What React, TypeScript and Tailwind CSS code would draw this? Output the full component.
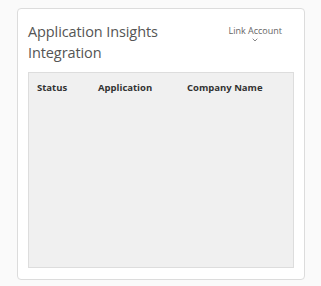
import React from "react";

export default function App() {
  return (
    <div
      className="w-[321px] h-[286px] bg-[#fafafa] pt-[8px] pl-[17px]"
      style={{ fontFamily: '"Open Sans", sans-serif' }}
    >
      <div className="w-[288px] h-[272px] bg-white border border-[#dcdcdc] rounded-[4px] flex flex-col px-[10px] pb-[11px] pt-[12px]">
        <div className="flex justify-between">
          <h2 className="text-[14.5px] leading-[21px] tracking-[-0.1px] text-[#555555] font-normal w-[160px]">
            Application Insights Integration
          </h2>
          <button className="flex flex-col items-center mr-[12px] mt-[4px] text-[9px] leading-[12px] text-[#666666]">
            <span>Link Account</span>
            <svg width="6" height="4" viewBox="0 0 6 4" className="mt-[1px]">
              <path d="M0.7 0.7l2.3 2.3 2.3-2.3" fill="none" stroke="#888" strokeWidth="1" />
            </svg>
          </button>
        </div>
        <div className="mt-[9px] flex-1 bg-[#f0f0f0] border border-[#dddddd]">
          <div className="grid grid-cols-[61px_89px_1fr] pl-[8px] pt-[9px] text-[9.5px] leading-[12px] font-bold text-[#333333]">
            <span>Status</span>
            <span>Application</span>
            <span>Company Name</span>
          </div>
        </div>
      </div>
    </div>
  );
}
